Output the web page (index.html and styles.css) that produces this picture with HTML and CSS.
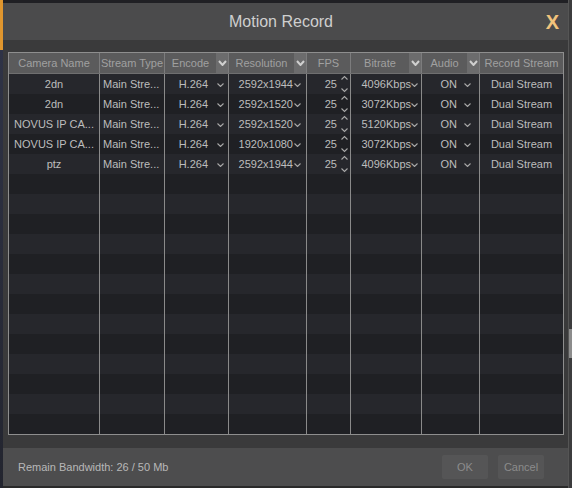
FILE: index.html
```html
<!DOCTYPE html>
<html>
<head>
<meta charset="utf-8">
<link rel="stylesheet" href="styles.css">
</head>
<body>
<div class="screen">
  <div class="edge-left"></div>
  <div class="dialog">
    <div class="titlebar">
      <span></span>
      <span class="title">Motion Record</span>
      <span class="close">X</span>
    </div>
    <div class="content">
      <div class="grid">
        <div class="row head">
          <div class="cell hc"><span class="lbl">Camera Name</span></div>
          <div class="cell hc"><span class="lbl">Stream Type</span></div>
          <div class="cell hc"><span class="lbl">Encode</span><span class="hbox"><svg width="9" height="6" viewBox="0 0 9 6"><polyline points="1,1 4.5,5 8,1" /></svg></span></div>
          <div class="cell hc"><span class="lbl">Resolution</span><span class="hbox"><svg width="9" height="6" viewBox="0 0 9 6"><polyline points="1,1 4.5,5 8,1" /></svg></span></div>
          <div class="cell hc"><span class="lbl">FPS</span></div>
          <div class="cell hc"><span class="lbl">Bitrate</span><span class="hbox"><svg width="9" height="6" viewBox="0 0 9 6"><polyline points="1,1 4.5,5 8,1" /></svg></span></div>
          <div class="cell hc"><span class="lbl">Audio</span><span class="hbox"><svg width="9" height="6" viewBox="0 0 9 6"><polyline points="1,1 4.5,5 8,1" /></svg></span></div>
          <div class="cell hc"><span class="lbl">Record Stream</span></div>
        </div>

        <div class="row">
          <div class="cell c">2dn</div>
          <div class="cell l">Main Stre...</div>
          <div class="cell enc">H.264<svg class="chev" width="7" height="4" viewBox="0 0 7 4"><polyline points="0.5,0.5 3.5,3.5 6.5,0.5" /></svg></div>
          <div class="cell res">2592x1944<svg class="chev" width="7" height="4" viewBox="0 0 7 4"><polyline points="0.5,0.5 3.5,3.5 6.5,0.5" /></svg></div>
          <div class="cell fps">25<svg class="spin" width="7" height="18" viewBox="0 0 7 18"><polyline points="0.5,4.5 3.5,1.5 6.5,4.5" /><polyline points="0.5,13.5 3.5,16.5 6.5,13.5" /></svg></div>
          <div class="cell bit">4096Kbps<svg class="chev" width="7" height="4" viewBox="0 0 7 4"><polyline points="0.5,0.5 3.5,3.5 6.5,0.5" /></svg></div>
          <div class="cell aud">ON<svg class="chev" width="7" height="4" viewBox="0 0 7 4"><polyline points="0.5,0.5 3.5,3.5 6.5,0.5" /></svg></div>
          <div class="cell c">Dual Stream</div>
        </div>
        <div class="row">
          <div class="cell c">2dn</div>
          <div class="cell l">Main Stre...</div>
          <div class="cell enc">H.264<svg class="chev" width="7" height="4" viewBox="0 0 7 4"><polyline points="0.5,0.5 3.5,3.5 6.5,0.5" /></svg></div>
          <div class="cell res">2592x1520<svg class="chev" width="7" height="4" viewBox="0 0 7 4"><polyline points="0.5,0.5 3.5,3.5 6.5,0.5" /></svg></div>
          <div class="cell fps">25<svg class="spin" width="7" height="18" viewBox="0 0 7 18"><polyline points="0.5,4.5 3.5,1.5 6.5,4.5" /><polyline points="0.5,13.5 3.5,16.5 6.5,13.5" /></svg></div>
          <div class="cell bit">3072Kbps<svg class="chev" width="7" height="4" viewBox="0 0 7 4"><polyline points="0.5,0.5 3.5,3.5 6.5,0.5" /></svg></div>
          <div class="cell aud">ON<svg class="chev" width="7" height="4" viewBox="0 0 7 4"><polyline points="0.5,0.5 3.5,3.5 6.5,0.5" /></svg></div>
          <div class="cell c">Dual Stream</div>
        </div>
        <div class="row">
          <div class="cell c">NOVUS IP CA...</div>
          <div class="cell l">Main Stre...</div>
          <div class="cell enc">H.264<svg class="chev" width="7" height="4" viewBox="0 0 7 4"><polyline points="0.5,0.5 3.5,3.5 6.5,0.5" /></svg></div>
          <div class="cell res">2592x1520<svg class="chev" width="7" height="4" viewBox="0 0 7 4"><polyline points="0.5,0.5 3.5,3.5 6.5,0.5" /></svg></div>
          <div class="cell fps">25<svg class="spin" width="7" height="18" viewBox="0 0 7 18"><polyline points="0.5,4.5 3.5,1.5 6.5,4.5" /><polyline points="0.5,13.5 3.5,16.5 6.5,13.5" /></svg></div>
          <div class="cell bit">5120Kbps<svg class="chev" width="7" height="4" viewBox="0 0 7 4"><polyline points="0.5,0.5 3.5,3.5 6.5,0.5" /></svg></div>
          <div class="cell aud">ON<svg class="chev" width="7" height="4" viewBox="0 0 7 4"><polyline points="0.5,0.5 3.5,3.5 6.5,0.5" /></svg></div>
          <div class="cell c">Dual Stream</div>
        </div>
        <div class="row">
          <div class="cell c">NOVUS IP CA...</div>
          <div class="cell l">Main Stre...</div>
          <div class="cell enc">H.264<svg class="chev" width="7" height="4" viewBox="0 0 7 4"><polyline points="0.5,0.5 3.5,3.5 6.5,0.5" /></svg></div>
          <div class="cell res">1920x1080<svg class="chev" width="7" height="4" viewBox="0 0 7 4"><polyline points="0.5,0.5 3.5,3.5 6.5,0.5" /></svg></div>
          <div class="cell fps">25<svg class="spin" width="7" height="18" viewBox="0 0 7 18"><polyline points="0.5,4.5 3.5,1.5 6.5,4.5" /><polyline points="0.5,13.5 3.5,16.5 6.5,13.5" /></svg></div>
          <div class="cell bit">3072Kbps<svg class="chev" width="7" height="4" viewBox="0 0 7 4"><polyline points="0.5,0.5 3.5,3.5 6.5,0.5" /></svg></div>
          <div class="cell aud">ON<svg class="chev" width="7" height="4" viewBox="0 0 7 4"><polyline points="0.5,0.5 3.5,3.5 6.5,0.5" /></svg></div>
          <div class="cell c">Dual Stream</div>
        </div>
        <div class="row">
          <div class="cell c">ptz</div>
          <div class="cell l">Main Stre...</div>
          <div class="cell enc">H.264<svg class="chev" width="7" height="4" viewBox="0 0 7 4"><polyline points="0.5,0.5 3.5,3.5 6.5,0.5" /></svg></div>
          <div class="cell res">2592x1944<svg class="chev" width="7" height="4" viewBox="0 0 7 4"><polyline points="0.5,0.5 3.5,3.5 6.5,0.5" /></svg></div>
          <div class="cell fps">25<svg class="spin" width="7" height="18" viewBox="0 0 7 18"><polyline points="0.5,4.5 3.5,1.5 6.5,4.5" /><polyline points="0.5,13.5 3.5,16.5 6.5,13.5" /></svg></div>
          <div class="cell bit">4096Kbps<svg class="chev" width="7" height="4" viewBox="0 0 7 4"><polyline points="0.5,0.5 3.5,3.5 6.5,0.5" /></svg></div>
          <div class="cell aud">ON<svg class="chev" width="7" height="4" viewBox="0 0 7 4"><polyline points="0.5,0.5 3.5,3.5 6.5,0.5" /></svg></div>
          <div class="cell c">Dual Stream</div>
        </div>

        <div class="row"><div class="cell"></div><div class="cell"></div><div class="cell"></div><div class="cell"></div><div class="cell"></div><div class="cell"></div><div class="cell"></div><div class="cell"></div></div>
        <div class="row"><div class="cell"></div><div class="cell"></div><div class="cell"></div><div class="cell"></div><div class="cell"></div><div class="cell"></div><div class="cell"></div><div class="cell"></div></div>
        <div class="row"><div class="cell"></div><div class="cell"></div><div class="cell"></div><div class="cell"></div><div class="cell"></div><div class="cell"></div><div class="cell"></div><div class="cell"></div></div>
        <div class="row"><div class="cell"></div><div class="cell"></div><div class="cell"></div><div class="cell"></div><div class="cell"></div><div class="cell"></div><div class="cell"></div><div class="cell"></div></div>
        <div class="row"><div class="cell"></div><div class="cell"></div><div class="cell"></div><div class="cell"></div><div class="cell"></div><div class="cell"></div><div class="cell"></div><div class="cell"></div></div>
        <div class="row"><div class="cell"></div><div class="cell"></div><div class="cell"></div><div class="cell"></div><div class="cell"></div><div class="cell"></div><div class="cell"></div><div class="cell"></div></div>
        <div class="row"><div class="cell"></div><div class="cell"></div><div class="cell"></div><div class="cell"></div><div class="cell"></div><div class="cell"></div><div class="cell"></div><div class="cell"></div></div>
        <div class="row"><div class="cell"></div><div class="cell"></div><div class="cell"></div><div class="cell"></div><div class="cell"></div><div class="cell"></div><div class="cell"></div><div class="cell"></div></div>
        <div class="row"><div class="cell"></div><div class="cell"></div><div class="cell"></div><div class="cell"></div><div class="cell"></div><div class="cell"></div><div class="cell"></div><div class="cell"></div></div>
        <div class="row"><div class="cell"></div><div class="cell"></div><div class="cell"></div><div class="cell"></div><div class="cell"></div><div class="cell"></div><div class="cell"></div><div class="cell"></div></div>
        <div class="row"><div class="cell"></div><div class="cell"></div><div class="cell"></div><div class="cell"></div><div class="cell"></div><div class="cell"></div><div class="cell"></div><div class="cell"></div></div>
        <div class="row"><div class="cell"></div><div class="cell"></div><div class="cell"></div><div class="cell"></div><div class="cell"></div><div class="cell"></div><div class="cell"></div><div class="cell"></div></div>
        <div class="row"><div class="cell"></div><div class="cell"></div><div class="cell"></div><div class="cell"></div><div class="cell"></div><div class="cell"></div><div class="cell"></div><div class="cell"></div></div>
      </div>
    </div>
    <div class="footer">
      <span class="bw">Remain Bandwidth: 26 / 50 Mb</span>
      <span class="btn">OK</span>
      <span class="btn">Cancel</span>
    </div>
  </div>
  <div class="edge-right"><div class="thumb"></div></div>
</div>
</body>
</html>
```

FILE: styles.css
```css
html, body {
  margin: 0;
  padding: 0;
}
body {
  width: 572px;
  height: 488px;
  overflow: hidden;
  background: #202024;
  font-family: "Liberation Sans", Arial, sans-serif;
}
.screen {
  display: flex;
  height: 488px;
}
.edge-left {
  width: 3px;
  background: linear-gradient(#e0962e 0, #e0962e 50px, #2f3346 50px, #23252f 100%);
}
.dialog {
  width: 565px;
  margin-top: 3px;
  height: 485px;
  display: flex;
  flex-direction: column;
  background: #3a3a3b;
  box-sizing: border-box;
  border-bottom: 2px solid #2a2a2a;
}
.titlebar {
  height: 37px;
  flex: none;
  background: #4b4b4c;
  display: grid;
  grid-template-columns: 1fr auto 1fr;
  align-items: center;
  padding-right: 9px;
}
.title {
  font-size: 16px;
  color: #cfcfcf;
  padding-top: 1px;
}
.close {
  justify-self: end;
  font-size: 20px;
  font-weight: bold;
  color: #f1c37c;
  line-height: 1;
  padding-top: 1px;
}
.content {
  flex: none;
  padding: 12px 0 13px 5px;
}
.grid {
  width: 556px;
  box-sizing: border-box;
  border: 1px solid #8e8e8e;
  background: #232428;
}
.row {
  display: grid;
  grid-template-columns: 90px 65px 64px 78px 44px 71px 58px 84px;
  height: 20px;
  font-size: 11px;
  color: #bdbdbd;
}
.row:nth-child(even) {
  background: #26272c;
}
.row:nth-child(odd) {
  background: #1f2024;
}
.row.head {
  height: 21px;
  background: #5b5b5c;
  color: #a0a0a0;
  box-sizing: border-box;
  border-bottom: 1px solid #6f6f70;
}
.cell {
  border-left: 1px solid #8a8a8a;
  display: flex;
  align-items: center;
  white-space: nowrap;
  overflow: hidden;
  min-width: 0;
}
.cell:first-child {
  border-left: none;
}
.head .cell {
  border-left-color: #7c7c7d;
}
.head .cell:first-child {
  border-left: none;
}
.hc .lbl {
  flex: 1;
  text-align: center;
}
.hbox {
  width: 12px;
  align-self: stretch;
  background: #6c6c6d;
  display: flex;
  align-items: center;
  justify-content: center;
}
.hbox polyline {
  fill: none;
  stroke: #cfcfcf;
  stroke-width: 2;
}
.c {
  justify-content: center;
}
.l {
  padding-left: 3px;
}
.enc, .res, .fps, .bit, .aud {
  justify-content: flex-end;
}
.enc { padding-right: 4px; }
.enc .chev { margin-left: 9px; }
.res { padding-right: 5px; }
.res .chev { margin-left: 1px; }
.fps { padding-right: 2px; }
.fps .spin { margin-left: 4px; }
.bit { padding-right: 3px; }
.bit .chev { margin-left: 0; }
.aud { padding-right: 8px; }
.aud .chev { margin-left: 7px; }
.chev polyline, .spin polyline {
  fill: none;
  stroke: #a8a8a8;
  stroke-width: 1.1;
}
.chev {
  margin-top: 2px;
}
.footer {
  flex: 1;
  background: #4d4d4e;
  display: flex;
  align-items: center;
  padding: 0 24px 0 15px;
  gap: 10px;
}
.bw {
  flex: 1;
  font-size: 11px;
  color: #b8b8b8;
}
.btn {
  width: 46px;
  height: 24px;
  border-radius: 2px;
  background: #555556;
  color: #8c8c8c;
  font-size: 11px;
  display: flex;
  align-items: center;
  justify-content: center;
}
.edge-right {
  width: 4px;
  background: #3c3c3d;
  border-left: 1px solid #555;
  box-sizing: border-box;
  display: flex;
  flex-direction: column;
  padding-top: 329px;
}
.thumb {
  height: 29px;
  background: #8c8c8c;
}
```
